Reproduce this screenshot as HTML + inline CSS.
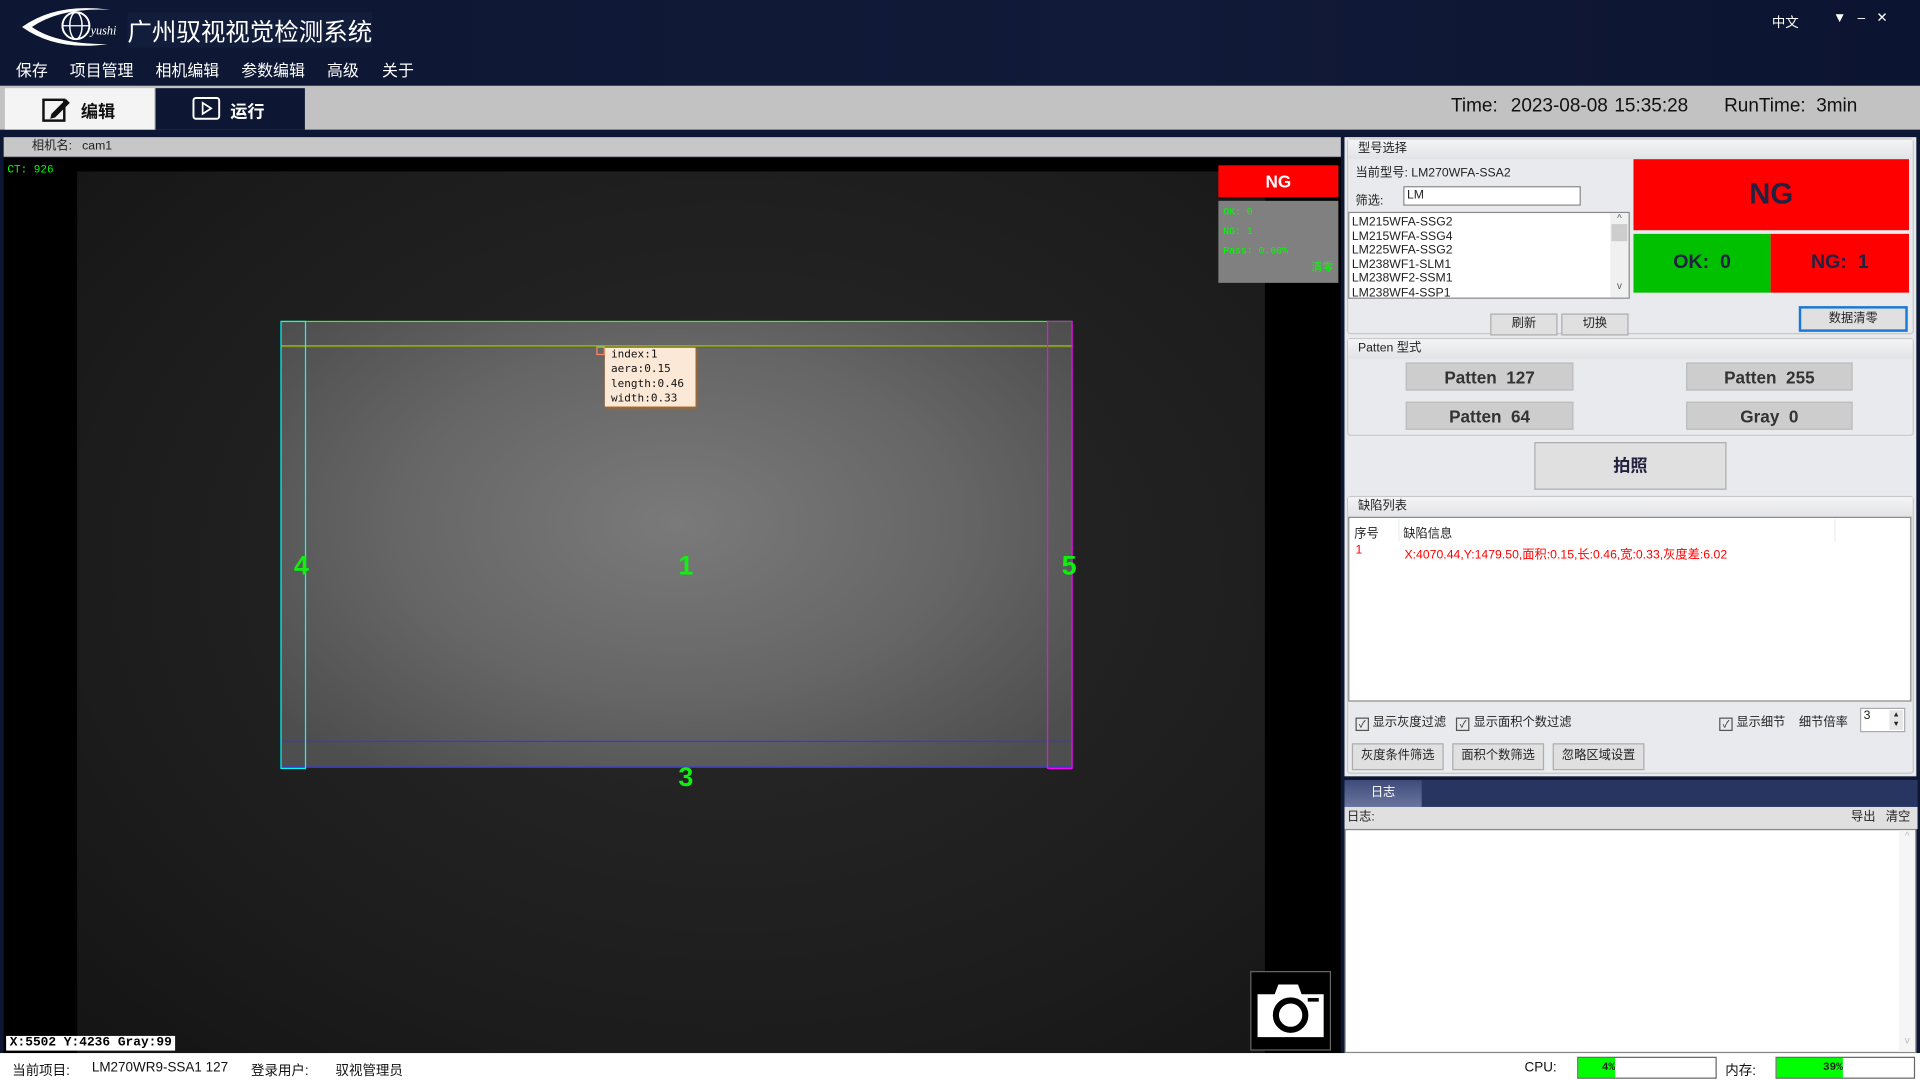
<!DOCTYPE html>
<html><head><meta charset="utf-8"><style>
html,body{margin:0;padding:0;width:1920px;height:1080px;overflow:hidden;background:#0c1530}
#w{position:absolute;left:0;top:0;width:1568px;height:882px;transform:scale(1.22449);transform-origin:0 0;font-family:"Liberation Sans","Microsoft YaHei","Noto Sans CJK SC",sans-serif;font-size:11px;color:#222}
.a{position:absolute}
.btn{position:absolute;background:#e0e0e0;border:1px solid #adadad;box-sizing:border-box;text-align:center;color:#222}
.pb{position:absolute;background:#cdcdcd;border:1px solid #bbb;box-sizing:border-box;text-align:center;font-weight:bold;font-size:14px;color:#333;line-height:22px}
.grp{position:absolute;border:1px solid #c8c8c8;border-radius:3px;box-sizing:border-box}
.gh{position:absolute;left:0;right:0;top:0;height:16px;background:linear-gradient(#f4f4f6,#e2e3e6);padding-left:8px;line-height:16px;font-size:10px}
.cb{display:inline-block;width:9px;height:9px;border:1px solid #555;vertical-align:-1px;margin-right:3px;font-size:8px;line-height:9px;text-align:center}
.m{position:absolute;top:47px;color:#fff;font-size:13px}
</style></head><body><div id="w">
<div class="a" style="left:0;top:0;width:1568px;height:70px;background:linear-gradient(90deg,#0d1733,#111a38 60%,#0b1430)"></div>
<svg class="a" style="left:16px;top:4px" width="84" height="36" viewBox="0 0 84 36"><path d="M2 18 Q30 -2 74 4 Q34 2 10 18 Q30 32 72 32 Q30 38 2 18Z" fill="#fff"/><circle cx="46" cy="17" r="11" fill="none" stroke="#fff" stroke-width="1.6"/><ellipse cx="46" cy="17" rx="5" ry="11" fill="none" stroke="#fff" stroke-width="1.2"/><line x1="35" y1="17" x2="57" y2="17" stroke="#fff"/><text x="58" y="24" fill="#fff" font-size="10" font-style="italic" font-family="Liberation Serif">yushi</text></svg>
<div class="a" style="left:104px;top:10px;color:#fff;font-size:20px;background:#121c3b">广州驭视视觉检测系统</div>
<div class="m" style="left:13px">保存</div><div class="m" style="left:57px">项目管理</div><div class="m" style="left:127px">相机编辑</div><div class="m" style="left:197px">参数编辑</div><div class="m" style="left:267px">高级</div><div class="m" style="left:312px">关于</div>
<div class="a" style="left:1447px;top:10px;color:#fff;font-size:11px">中文</div>
<div class="a" style="left:1497px;top:8px;color:#fff;font-size:11px">▼&nbsp;&nbsp;&nbsp;–&nbsp;&nbsp;&nbsp;✕</div>
<div class="a" style="left:0;top:70px;width:1568px;height:36px;background:#c2c2c2"></div>
<div class="a" style="left:4px;top:72px;width:122px;height:34px;background:#f4f4f4"></div>
<svg class="a" style="left:34px;top:78px" width="24" height="22"><rect x="1.5" y="3.5" width="17" height="17" fill="none" stroke="#111" stroke-width="2"/><path d="M8 15 L20 3 L23 6 L11 18 L7 19Z" fill="#111"/></svg>
<div class="a" style="left:66px;top:81px;font-size:14px;font-weight:bold;color:#111">编辑</div>
<div class="a" style="left:127px;top:72px;width:122px;height:34px;background:#0d1733"></div>
<svg class="a" style="left:157px;top:79px" width="24" height="20"><rect x="1" y="1" width="21" height="17" rx="2" fill="none" stroke="#fff" stroke-width="1.6"/><path d="M8.5 5 L15.5 9.5 L8.5 14Z" fill="none" stroke="#fff" stroke-width="1.4"/></svg>
<div class="a" style="left:188px;top:81px;font-size:14px;font-weight:bold;color:#fff">运行</div>
<div class="a" style="left:1185px;top:78px;font-size:15.5px;color:#111;word-spacing:1px">Time:&nbsp; 2023-08-08 15:35:28</div>
<div class="a" style="left:1408px;top:78px;font-size:15.5px;color:#111">RunTime:&nbsp; 3min</div>
<div class="a" style="left:0;top:106px;width:1568px;height:4px;background:#0d1733"></div>
<div class="a" style="left:0;top:110px;width:1098px;height:750px;background:#0d1733"></div>
<div class="a" style="left:3px;top:112px;width:1092px;height:16px;background:#c7c7c7;font-size:10px;line-height:16px"><span style="margin-left:23px">相机名:&nbsp;&nbsp;&nbsp;cam1</span></div>
<div class="a" style="left:3px;top:129px;width:1092px;height:731px;background:#000"></div>
<div class="a" style="left:63px;top:140px;width:970px;height:720px;background:radial-gradient(ellipse at 55% 45%,#2a2a2a,#1c1c1c 70%,#141414)"></div>
<div class="a" style="left:6px;top:134px;color:#0f0;font-size:9px;font-family:'Liberation Mono',monospace">CT: 926</div>
<div class="a" style="left:230px;top:263px;width:646px;height:364px;background:radial-gradient(ellipse at 50% 45%,#7a7a7a,#666 50%,#4e4e4e 90%)"></div>
<div class="a" style="left:230px;top:262px;width:646px;height:0;border-top:1px solid #2f2"></div>
<div class="a" style="left:230px;top:282px;width:646px;height:0;border-top:1px solid #2f2"></div>
<div class="a" style="left:230px;top:283px;width:646px;height:0;border-top:1px solid #e22"></div>
<div class="a" style="left:230px;top:605px;width:646px;height:0;border-top:1px solid #33f"></div>
<div class="a" style="left:230px;top:626px;width:646px;height:0;border-top:1px solid #33f"></div>
<div class="a" style="left:229px;top:262px;width:19px;height:364px;border:1px solid #0ff"></div>
<div class="a" style="left:855px;top:262px;width:19px;height:364px;border:1px solid #f0f"></div>
<div class="a" style="left:240px;top:449px;color:#1e1;font-size:22px;font-weight:bold">4</div>
<div class="a" style="left:554px;top:449px;color:#1e1;font-size:22px;font-weight:bold">1</div>
<div class="a" style="left:867px;top:449px;color:#1e1;font-size:22px;font-weight:bold">5</div>
<div class="a" style="left:554px;top:622px;color:#1e1;font-size:22px;font-weight:bold">3</div>
<div class="a" style="left:487px;top:283px;width:5px;height:5px;border:1px solid #f86"></div>
<div class="a" style="left:494px;top:284px;width:74px;height:48px;background:#fbe8d6;box-shadow:1px 1px 3px #c60;font-family:'DejaVu Sans Mono',monospace;font-size:9px;line-height:12px;padding-left:5px;box-sizing:border-box;color:#111">index:1<br>aera:0.15<br>length:0.46<br>width:0.33</div>
<div class="a" style="left:995px;top:135px;width:98px;height:26px;background:#f00;color:#fff;font-weight:bold;font-size:14px;text-align:center;line-height:26px">NG</div>
<div class="a" style="left:995px;top:164px;width:98px;height:67px;background:#808080;color:#0f0;font-family:'Liberation Mono',monospace;font-size:8px;line-height:16px;padding:2px 4px;box-sizing:border-box">OK: 0<br>NG: 1<br>Pass: 0.00%<div style="text-align:right;font-size:9px;line-height:10px">清零</div></div>
<div class="a" style="left:1021px;top:793px;width:64px;height:63px;border:1px solid #666;background:#000"></div>
<svg class="a" style="left:1024px;top:800px" width="60" height="50"><path d="M3 12 H17 L20 4 H36 L39 12 H57 V47 H3Z" fill="#fff"/><circle cx="30" cy="29" r="12" fill="none" stroke="#000" stroke-width="5"/><rect x="44" y="15" width="9" height="3" fill="#000"/></svg>
<div class="a" style="left:5px;top:846px;background:#fff;color:#000;font-family:'Liberation Mono',monospace;font-weight:bold;font-size:10.5px;padding:0 3px;line-height:12px">X:5502 Y:4236 Gray:99</div>
<div class="a" style="left:1098px;top:110px;width:470px;height:750px;background:#0d1733"></div>
<div class="a" style="left:1098px;top:112px;width:467px;height:522px;background:#e9eaed"></div>
<div class="grp" style="left:1100px;top:113px;width:463px;height:160px"><div class="gh">型号选择</div></div>
<div class="a" style="left:1107px;top:132px;font-size:10px">当前型号: LM270WFA-SSA2</div>
<div class="a" style="left:1107px;top:155px;font-size:10px">筛选:</div>
<div class="a" style="left:1146px;top:152px;width:145px;height:16px;background:#fff;border:1px solid #888;box-sizing:border-box;font-size:10px;padding-left:2px;line-height:14px">LM</div>
<div class="a" style="left:1101px;top:173px;width:230px;height:71px;background:#fff;border:1px solid #888;box-sizing:border-box;font-size:10px;line-height:11.5px;padding:2px">LM215WFA-SSG2<br>LM215WFA-SSG4<br>LM225WFA-SSG2<br>LM238WF1-SLM1<br>LM238WF2-SSM1<br>LM238WF4-SSP1</div>
<div class="a" style="left:1315px;top:174px;width:15px;height:69px;background:#f0f0f0;font-size:8px;text-align:center;color:#555">^<div style="background:#cdcdcd;height:14px;margin:0 1px"></div><div style="margin-top:32px">v</div></div>
<div class="a" style="left:1334px;top:130px;width:225px;height:58px;background:#f00;color:#222240;font-weight:bold;font-size:24px;text-align:center;line-height:58px">NG</div>
<div class="a" style="left:1334px;top:191px;width:112px;height:48px;background:#00c000;color:#222240;font-weight:bold;font-size:16px;text-align:center;line-height:48px">OK:&nbsp; 0</div>
<div class="a" style="left:1446px;top:191px;width:113px;height:48px;background:#f00;color:#222240;font-weight:bold;font-size:16px;text-align:center;line-height:48px">NG:&nbsp; 1</div>
<div class="btn" style="left:1217px;top:256px;width:55px;height:18px;line-height:16px;font-size:10px">刷新</div>
<div class="btn" style="left:1275px;top:256px;width:55px;height:18px;line-height:16px;font-size:10px">切换</div>
<div class="btn" style="left:1469px;top:250px;width:89px;height:21px;line-height:18px;font-size:10px;border:2px solid #1a78d8">数据清零</div>
<div class="grp" style="left:1100px;top:276px;width:463px;height:80px"><div class="gh">Patten 型式</div></div>
<div class="pb" style="left:1148px;top:296px;width:137px;height:23px">Patten&nbsp; 127</div>
<div class="pb" style="left:1377px;top:296px;width:136px;height:23px">Patten&nbsp; 255</div>
<div class="pb" style="left:1148px;top:328px;width:137px;height:23px">Patten&nbsp; 64</div>
<div class="pb" style="left:1377px;top:328px;width:136px;height:23px">Gray&nbsp; 0</div>
<div class="btn" style="left:1253px;top:361px;width:157px;height:39px;line-height:37px;font-size:14px;font-weight:bold;color:#222240">拍照</div>
<div class="grp" style="left:1100px;top:405px;width:463px;height:227px"><div class="gh">缺陷列表</div></div>
<div class="a" style="left:1101px;top:422px;width:460px;height:151px;background:#fff;border:1px solid #888;box-sizing:border-box"></div>
<div class="a" style="left:1106px;top:427px;font-size:10px">序号</div>
<div class="a" style="left:1146px;top:427px;font-size:10px">缺陷信息</div>
<div class="a" style="left:1142px;top:424px;width:0;height:18px;border-left:1px solid #eee"></div>
<div class="a" style="left:1498px;top:424px;width:0;height:18px;border-left:1px solid #eee"></div>
<div class="a" style="left:1107px;top:444px;font-size:10px;color:#f00">1</div>
<div class="a" style="left:1147px;top:444px;font-size:10px;color:#f00">X:4070.44,Y:1479.50,面积:0.15,长:0.46,宽:0.33,灰度差:6.02</div>
<div class="a" style="left:1107px;top:581px;font-size:10px"><span class="cb">✓</span>显示灰度过滤&nbsp;&nbsp;&nbsp;<span class="cb">✓</span>显示面积个数过滤</div>
<div class="a" style="left:1404px;top:581px;font-size:10px"><span class="cb">✓</span>显示细节&nbsp;&nbsp;&nbsp;&nbsp;细节倍率</div>
<div class="a" style="left:1519px;top:578px;width:37px;height:20px;background:#fff;border:1px solid #aaa;box-sizing:border-box;font-size:10px;padding-left:2px">3</div>
<div class="a" style="left:1543px;top:580px;width:11px;height:16px;background:#e6e6e6;font-size:6px;line-height:8px;text-align:center">▲<br>▼</div>
<div class="btn" style="left:1104px;top:607px;width:75px;height:22px;line-height:20px;font-size:10px">灰度条件筛选</div>
<div class="btn" style="left:1186px;top:607px;width:75px;height:22px;line-height:20px;font-size:10px">面积个数筛选</div>
<div class="btn" style="left:1268px;top:607px;width:75px;height:22px;line-height:20px;font-size:10px">忽略区域设置</div>
<div class="a" style="left:1098px;top:637px;width:468px;height:22px;background:#283560"></div>
<div class="a" style="left:1098px;top:637px;width:63px;height:22px;background:linear-gradient(#3e4a78,#6a76a0);color:#fff;font-size:10px;text-align:center;line-height:22px">日志</div>
<div class="a" style="left:1098px;top:659px;width:468px;height:18px;background:#e0e0e0;font-size:10px;line-height:17px"><span style="margin-left:2px">日志:</span><span style="position:absolute;right:6px">导出&nbsp;&nbsp;&nbsp;清空</span></div>
<div class="a" style="left:1098px;top:677px;width:467px;height:183px;background:#fff;border:1px solid #888;box-sizing:border-box"></div>
<div class="a" style="left:1551px;top:678px;width:13px;height:181px;background:#f5f5f5;color:#bbb;font-size:8px;text-align:center">^<div style="margin-top:158px">v</div></div>
<div class="a" style="left:0;top:860px;width:1568px;height:22px;background:#fff"></div>
<div class="a" style="left:10px;top:866px;font-size:11px;color:#111">当前项目:</div>
<div class="a" style="left:75px;top:866px;font-size:11px;color:#111">LM270WR9-SSA1 127</div>
<div class="a" style="left:205px;top:866px;font-size:11px;color:#111">登录用户:</div>
<div class="a" style="left:274px;top:866px;font-size:11px;color:#111">驭视管理员</div>
<div class="a" style="left:1245px;top:866px;font-size:11px;color:#111">CPU:</div>
<div class="a" style="left:1288px;top:863px;width:114px;height:18px;border:1px solid #666;box-sizing:border-box;background:#fff"><div style="width:30px;height:16px;background:#0f0;font-size:9px;font-weight:bold;font-family:'Liberation Mono',monospace;text-align:right;line-height:16px">4%</div></div>
<div class="a" style="left:1409px;top:866px;font-size:11px;color:#111">内存:</div>
<div class="a" style="left:1450px;top:863px;width:114px;height:18px;border:1px solid #666;box-sizing:border-box;background:#fff"><div style="width:54px;height:16px;background:#0f0;font-size:9px;font-weight:bold;font-family:'Liberation Mono',monospace;text-align:right;line-height:16px">39%</div></div>
</div></body></html>
